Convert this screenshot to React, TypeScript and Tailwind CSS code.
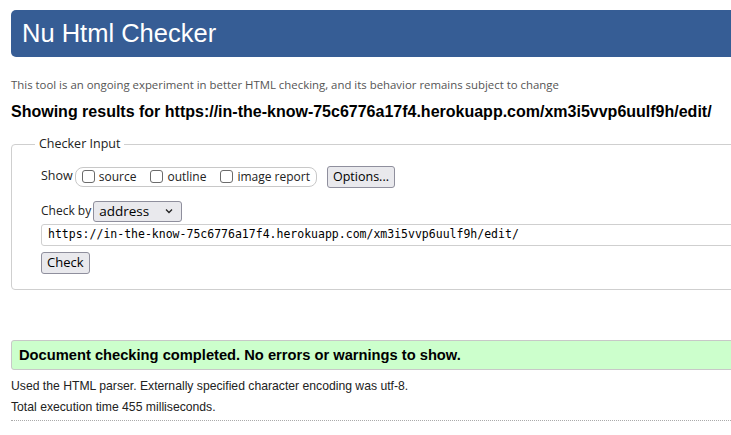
const url = "https://in-the-know-75c6776a17f4.herokuapp.com/xm3i5vvp6uulf9h/edit/";

function Box({ label }: { label: string }) {
  return (
    <label className="flex items-center gap-[4px]">
      <span className="inline-block h-[13px] w-[13px] rounded-[3px] border border-[#6b6b6b] bg-white" />
      <span>{label}</span>
    </label>
  );
}

export default function App() {
  return (
    <div className="h-[435px] w-[731px] overflow-hidden bg-white">
      <div className="w-[790px] pl-[11px] pt-[10px] font-['Open_Sans',sans-serif] text-[#222]">
        <div className="flex h-[47px] items-center rounded-l-[5px] bg-[#365d95] pl-[11px]">
          <h1 className="font-['Liberation_Sans',Arial,sans-serif] text-[25.5px] leading-none text-white">
            Nu Html Checker
          </h1>
        </div>

        <p className="mt-[20px] text-[11.4px] leading-[16px] text-[#555]">
          This tool is an ongoing experiment in better HTML checking, and its behavior remains subject to change
        </p>

        <h2 className="mt-[9px] font-['Liberation_Sans',Arial,sans-serif] text-[16px] font-bold leading-[20px] text-black">
          Showing results for {url}
        </h2>

        <fieldset className="mt-[13px] h-[155px] rounded-[4px] border border-[#cfcfcf] px-[29px] pb-[14px]">
          <legend className="-ml-[6px] px-[4px] text-[12.5px] text-[#222]">Checker Input</legend>

          <div className="mt-[12px] flex items-center text-[12px]">
            <span className="mr-[2px] text-[12.5px]">Show</span>
            <div className="flex h-[20px] items-center gap-[14px] rounded-[8px] border border-[#c8c8c8] pl-[6px] pr-[6px]">
              <Box label="source" />
              <Box label="outline" />
              <Box label="image report" />
            </div>
            <button className="ml-[10px] h-[22px] rounded-[3px] border border-[#8f8f9d] bg-[#e9e9ed] px-[5px] text-[12.5px] leading-none text-black">
              Options...
            </button>
          </div>

          <div className="mt-[13px] flex items-center text-[12px]">
            <span className="mr-[2px]">Check by</span>
            <div className="flex h-[21px] w-[89px] items-center justify-between rounded-[3px] border border-[#8f8f9d] bg-[#e9e9ed] pl-[5px] pr-[8px] text-[13.5px] text-black">
              <span>address</span>
              <svg width="8" height="6" viewBox="0 0 8 6" fill="none" stroke="#222" strokeWidth="1.3">
                <path d="M1 1.5 L4 4.5 L7 1.5" />
              </svg>
            </div>
          </div>

          <div className="mt-[2px] flex h-[22px] items-center rounded-[3px] border border-[#cfcfcf] pl-[6px] font-['DejaVu_Sans_Mono',monospace] text-[11.5px] text-black">
            {url}
          </div>

          <button className="mt-[6px] h-[22px] rounded-[3px] border border-[#8f8f9d] bg-[#e9e9ed] px-[5px] text-[13px] leading-none text-black">
            Check
          </button>
        </fieldset>

        <div className="mt-[50px] flex h-[30px] items-center rounded-l-[3px] border border-[#c8c8c8] bg-[#ccffcc] pl-[7px] font-['Liberation_Sans',Arial,sans-serif] text-[14.7px] font-bold text-black">
          Document checking completed. No errors or warnings to show.
        </div>

        <div className="font-['Liberation_Sans',Arial,sans-serif] text-[12.2px] text-[#222]">
          <p className="mt-[9px] leading-[14px]">
            Used the HTML parser. Externally specified character encoding was utf-8.
          </p>
          <p className="mt-[7px] leading-[14px]">Total execution time 455 milliseconds.</p>
        </div>
        <div className="mt-[6px] w-[720px] border-t border-dotted border-[#aaa]" />
      </div>
    </div>
  );
}
